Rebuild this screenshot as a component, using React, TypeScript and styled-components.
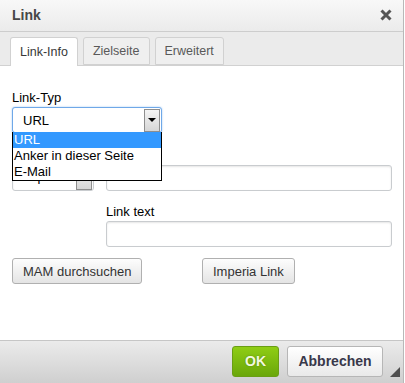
import React from "react";
import styled, { createGlobalStyle } from "styled-components";

const Global = createGlobalStyle`
  html, body { margin: 0; padding: 0; background: #fff; }
  body { font-family: "Liberation Sans", Arial, sans-serif; }
  * { box-sizing: border-box; }
`;

const Dialog = styled.div`
  width: 404px;
  height: 383px;
  display: flex;
  flex-direction: column;
  border-right: 1px solid #b8b8b8;
  overflow: hidden;
`;

const TitleBar = styled.div`
  height: 32px;
  flex: none;
  display: flex;
  align-items: center;
  justify-content: space-between;
  padding: 0 11px 1px 12px;
  background: linear-gradient(#f8f8f8, #ebebeb);
  border-bottom: 1px solid #cdcdcd;
`;

const Title = styled.span`
  font-weight: bold;
  font-size: 14px;
  color: #474747;
`;

const Close = styled.span`
  width: 12px;
  height: 12px;
  display: flex;
`;

const TabBar = styled.div`
  height: 34px;
  flex: none;
  display: flex;
  align-items: flex-end;
  gap: 5px;
  padding-left: 10px;
  background: #ebebeb;
  border-bottom: 1px solid #d1d1d1;
`;

const Tab = styled.div<{ $active?: boolean }>`
  height: ${(p) => (p.$active ? 29 : 28)}px;
  margin-bottom: ${(p) => (p.$active ? -1 : 0)}px;
  padding: 0 9px;
  display: flex;
  align-items: center;
  font-size: 12.5px;
  color: ${(p) => (p.$active ? "#383838" : "#595959")};
  background: ${(p) => (p.$active ? "#fff" : "#efefef")};
  border: 1px solid #d1d1d1;
  border-bottom: ${(p) => (p.$active ? "none" : "1px solid #d1d1d1")};
  border-radius: 3px 3px 0 0;
`;

const Content = styled.div`
  flex: 1;
  position: relative;
  background: #fff;
  padding: 24px 11px 0 12px;
`;

const Label = styled.div`
  font-size: 13px;
  color: #000;
  line-height: 15px;
  height: 15px;
  margin-bottom: 2px;
`;

const SelectBox = styled.div<{ $width: number; $focus?: boolean }>`
  width: ${(p) => p.$width}px;
  height: 26px;
  display: flex;
  align-items: center;
  justify-content: space-between;
  padding: 0 1px 0 10px;
  font-size: 13px;
  color: #000;
  background: #fff;
  border: 1px solid ${(p) => (p.$focus ? "#6fa8e8" : "#c9cccf")};
  border-radius: 3px;
  box-shadow: ${(p) => (p.$focus ? "0 0 2px #9cc4f0" : "inset 0 1px 2px #e6e6e6")};
`;

const ArrowBox = styled.span`
  width: 16px;
  height: 23px;
  display: flex;
  align-items: center;
  justify-content: center;
  background: linear-gradient(#f4f4f4, #d6d6d6);
  border: 1px solid #8e8e8e;
`;

const Arrow = styled.span`
  width: 0;
  height: 0;
  border-left: 4px solid transparent;
  border-right: 4px solid transparent;
  border-top: 4px solid #000;
`;

const Grid = styled.div`
  display: grid;
  grid-template-columns: 82px 1fr;
  column-gap: 12px;
  margin-top: 15px;
`;

const Field = styled.div<{ $top?: number }>`
  display: flex;
  flex-direction: column;
  margin-top: ${(p) => p.$top ?? 0}px;
`;

const Input = styled.div`
  height: 26px;
  background: #fff;
  border: 1px solid #c9cccf;
  border-radius: 3px;
  box-shadow: inset 0 1px 2px #e6e6e6;
`;

const ButtonRow = styled.div`
  display: grid;
  grid-template-columns: 1fr 1fr;
  margin-top: 11px;
`;

const Cell = styled.div`
  display: flex;
`;

const Btn = styled.button`
  height: 26px;
  padding: 0 10px;
  font-family: "Liberation Sans", Arial, sans-serif;
  font-size: 13px;
  color: #333;
  background: linear-gradient(#fdfdfd, #e4e4e4);
  border: 1px solid #b0b0b0;
  border-radius: 3px;
`;

const DropList = styled.div`
  position: absolute;
  left: 12px;
  top: 66px;
  width: 150px;
  background: #fff;
  border: 1px solid #000;
  border-top: none;
  font-size: 13px;
`;

const Option = styled.div<{ $sel?: boolean }>`
  height: 16px;
  line-height: 16px;
  padding-left: 1px;
  color: ${(p) => (p.$sel ? "#fff" : "#000")};
  background: ${(p) => (p.$sel ? "#3399ff" : "#fff")};
`;

const Footer = styled.div`
  height: 43px;
  flex: none;
  position: relative;
  display: flex;
  align-items: center;
  justify-content: flex-end;
  gap: 8px;
  padding: 0 20px 2px 0;
  border-top: 1px solid #c6c6c6;
  background: linear-gradient(#ebebeb, #cfcfcf);
`;

const OkBtn = styled.button`
  width: 47px;
  height: 31px;
  font-family: "Liberation Sans", Arial, sans-serif;
  font-size: 14px;
  font-weight: bold;
  color: #f2f9e0;
  text-shadow: 0 0 2px #5a8a00;
  background: linear-gradient(#8fcd15, #6aa70a);
  border: 1px solid #6a9e14;
  border-radius: 3px;
`;

const CancelBtn = styled.button`
  width: 96px;
  height: 31px;
  font-family: "Liberation Sans", Arial, sans-serif;
  font-size: 14px;
  font-weight: bold;
  color: #38384a;
  background: linear-gradient(#ffffff, #e9e9e9);
  border: 1px solid #b6b6b6;
  border-radius: 3px;
`;

const Grip = styled.span`
  position: absolute;
  right: 3px;
  bottom: 6px;
  width: 0;
  height: 0;
  border-left: 10px solid transparent;
  border-bottom: 10px solid #4f4f4f;
`;

const Hidden = styled.span`
  font-size: 13px;
  margin-top: -4px;
`;

export default function App() {
  return (
    <>
      <Global />
      <Dialog>
        <TitleBar>
          <Title>Link</Title>
          <Close>
            <svg width="12" height="12" viewBox="0 0 12 12">
              <path d="M1.5 1.5 L10.5 10.5 M10.5 1.5 L1.5 10.5" stroke="#555" strokeWidth="3" />
            </svg>
          </Close>
        </TitleBar>
        <TabBar>
          <Tab $active>Link-Info</Tab>
          <Tab>Zielseite</Tab>
          <Tab>Erweitert</Tab>
        </TabBar>
        <Content>
          <Label>Link-Typ</Label>
          <SelectBox $width={150} $focus>
            <span>URL</span>
            <ArrowBox>
              <Arrow />
            </ArrowBox>
          </SelectBox>
          <Grid>
            <Field>
              <Label>Protokoll</Label>
              <SelectBox $width={82}>
                <Hidden>http://</Hidden>
                <ArrowBox>
                  <Arrow />
                </ArrowBox>
              </SelectBox>
            </Field>
            <Field>
              <Label>URL</Label>
              <Input />
            </Field>
            <span />
            <Field $top={13}>
              <Label>Link text</Label>
              <Input />
            </Field>
          </Grid>
          <ButtonRow>
            <Cell>
              <Btn>MAM durchsuchen</Btn>
            </Cell>
            <Cell>
              <Btn>Imperia Link</Btn>
            </Cell>
          </ButtonRow>
          <DropList>
            <Option $sel>URL</Option>
            <Option>Anker in dieser Seite</Option>
            <Option>E-Mail</Option>
          </DropList>
        </Content>
        <Footer>
          <OkBtn>OK</OkBtn>
          <CancelBtn>Abbrechen</CancelBtn>
          <Grip />
        </Footer>
      </Dialog>
    </>
  );
}
